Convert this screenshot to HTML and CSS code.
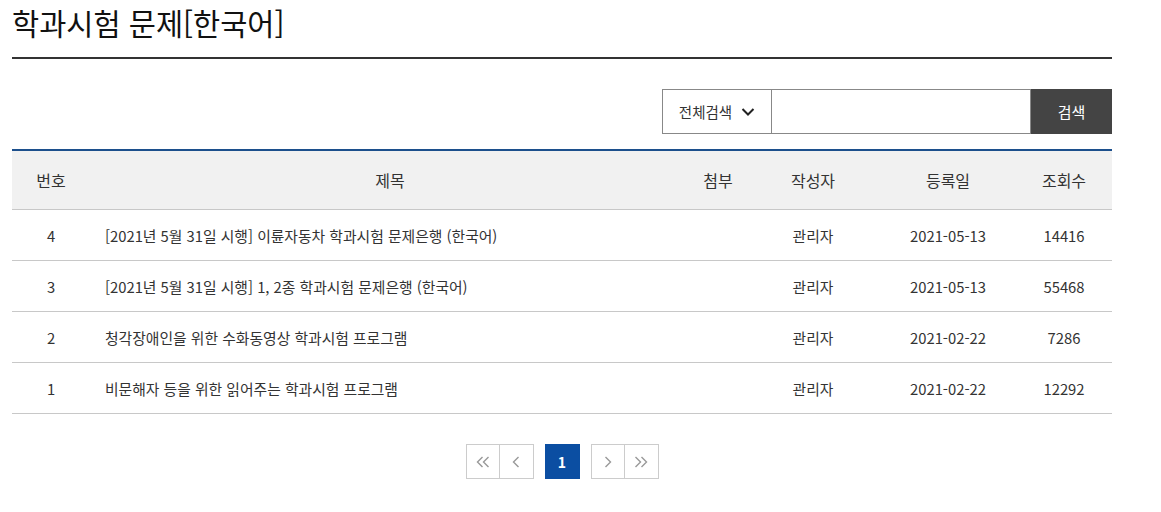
FILE: index.html
```html
<!DOCTYPE html>
<html lang="ko">
<head>
    <meta charset="UTF-8">
    <meta name="viewport" content="width=device-width, initial-scale=1.0">
    <title>학과시험 문제[한국어]</title>
    <link rel="stylesheet" href="styles.css">
</head>
<body>
    <div class="container">
        <h1 class="page-title">학과시험 문제[한국어]</h1>

        <form class="search-bar" onsubmit="return false;">
            <div class="search-select">
                <span>전체검색</span>
                <svg width="14" height="10" viewBox="0 0 14 10"><path d="M1.5 2 L7 7.5 L12.5 2" fill="none" stroke="#222" stroke-width="2"/></svg>
            </div>
            <input type="text" class="search-input">
            <button type="submit" class="search-button">검색</button>
        </form>

        <table class="board">
            <colgroup>
                <col style="width: 78px">
                <col style="width: 600px">
                <col style="width: 56px">
                <col style="width: 134px">
                <col style="width: 136px">
                <col style="width: 96px">
            </colgroup>
            <thead>
                <tr>
                    <th>번호</th>
                    <th>제목</th>
                    <th>첨부</th>
                    <th>작성자</th>
                    <th>등록일</th>
                    <th>조회수</th>
                </tr>
            </thead>
            <tbody>
                <tr>
                    <td>4</td>
                    <td class="subject">[2021년 5월 31일 시행] 이륜자동차 학과시험 문제은행 (한국어)</td>
                    <td></td>
                    <td>관리자</td>
                    <td>2021-05-13</td>
                    <td>14416</td>
                </tr>
                <tr>
                    <td>3</td>
                    <td class="subject">[2021년 5월 31일 시행] 1, 2종 학과시험 문제은행 (한국어)</td>
                    <td></td>
                    <td>관리자</td>
                    <td>2021-05-13</td>
                    <td>55468</td>
                </tr>
                <tr>
                    <td>2</td>
                    <td class="subject">청각장애인을 위한 수화동영상 학과시험 프로그램</td>
                    <td></td>
                    <td>관리자</td>
                    <td>2021-02-22</td>
                    <td>7286</td>
                </tr>
                <tr>
                    <td>1</td>
                    <td class="subject">비문해자 등을 위한 읽어주는 학과시험 프로그램</td>
                    <td></td>
                    <td>관리자</td>
                    <td>2021-02-22</td>
                    <td>12292</td>
                </tr>
            </tbody>
        </table>

        <div class="pagination">
            <div class="page-group">
                <a href="#" class="page-link" title="처음">
                    <svg width="14" height="14" viewBox="0 0 14 14"><path d="M6.5 2 L1.5 7 L6.5 12 M12.5 2 L7.5 7 L12.5 12" fill="none" stroke="#999" stroke-width="1.4"/></svg>
                </a>
                <a href="#" class="page-link" title="이전">
                    <svg width="14" height="14" viewBox="0 0 14 14"><path d="M9.5 2 L4.5 7 L9.5 12" fill="none" stroke="#999" stroke-width="1.4"/></svg>
                </a>
            </div>
            <a href="#" class="page-link active">1</a>
            <div class="page-group">
                <a href="#" class="page-link" title="다음">
                    <svg width="14" height="14" viewBox="0 0 14 14"><path d="M4.5 2 L9.5 7 L4.5 12" fill="none" stroke="#999" stroke-width="1.4"/></svg>
                </a>
                <a href="#" class="page-link" title="마지막">
                    <svg width="14" height="14" viewBox="0 0 14 14"><path d="M1.5 2 L6.5 7 L1.5 12 M7.5 2 L12.5 7 L7.5 12" fill="none" stroke="#999" stroke-width="1.4"/></svg>
                </a>
            </div>
        </div>
    </div>
</body>
</html>
```

FILE: styles.css
```css
body {
    margin: 0;
    font-family: "Noto Sans CJK KR", "Noto Sans", sans-serif;
    color: #333;
    background-color: #fff;
}
.container {
    width: 1100px;
    margin-left: 12px;
}
.page-title {
    margin: 0;
    padding-top: 2px;
    height: 55px;
    font-size: 29.5px;
    font-weight: 400;
    line-height: 40px;
    color: #111;
    border-bottom: 2px solid #333;
}
.search-bar {
    display: flex;
    justify-content: flex-end;
    margin-top: 30px;
    height: 45px;
}
.search-select {
    display: flex;
    align-items: center;
    justify-content: center;
    gap: 9px;
    width: 109px;
    border: 1px solid #888;
    border-right: none;
    font-size: 14.5px;
    color: #333;
    box-sizing: border-box;
}
.search-input {
    width: 260px;
    height: 45px;
    margin: 0;
    border: 1px solid #888;
    box-sizing: border-box;
    outline: none;
}
.search-button {
    width: 81px;
    height: 45px;
    border: none;
    background-color: #444;
    color: #fff;
    font-family: inherit;
    font-size: 15px;
    cursor: pointer;
}
.board {
    width: 100%;
    margin-top: 15px;
    border-collapse: collapse;
    table-layout: fixed;
    border-top: 2px solid #1c4f8c;
    font-size: 14.8px;
}
.board th {
    height: 58px;
    padding: 0;
    background-color: #f1f1f1;
    font-size: 16px;
    font-weight: 400;
    color: #333;
    border-bottom: 1px solid #c8c8c8;
}
.board td {
    height: 50px;
    padding: 0;
    text-align: center;
    color: #333;
    border-bottom: 1px solid #c8c8c8;
}
.board td.subject {
    text-align: left;
    padding-left: 15px;
}
.pagination {
    display: flex;
    justify-content: center;
    gap: 11px;
    margin-top: 30px;
}
.page-group {
    display: flex;
}
.page-link {
    display: flex;
    align-items: center;
    justify-content: center;
    width: 34px;
    height: 35px;
    border: 1px solid #ccc;
    box-sizing: border-box;
    color: #888;
    text-decoration: none;
}
.page-group .page-link + .page-link {
    border-left: none;
}
.page-link.active {
    width: 35px;
    background-color: #0b4ea2;
    border-color: #0b4ea2;
    color: #fff;
    font-size: 14px;
    font-weight: 700;
}
```
